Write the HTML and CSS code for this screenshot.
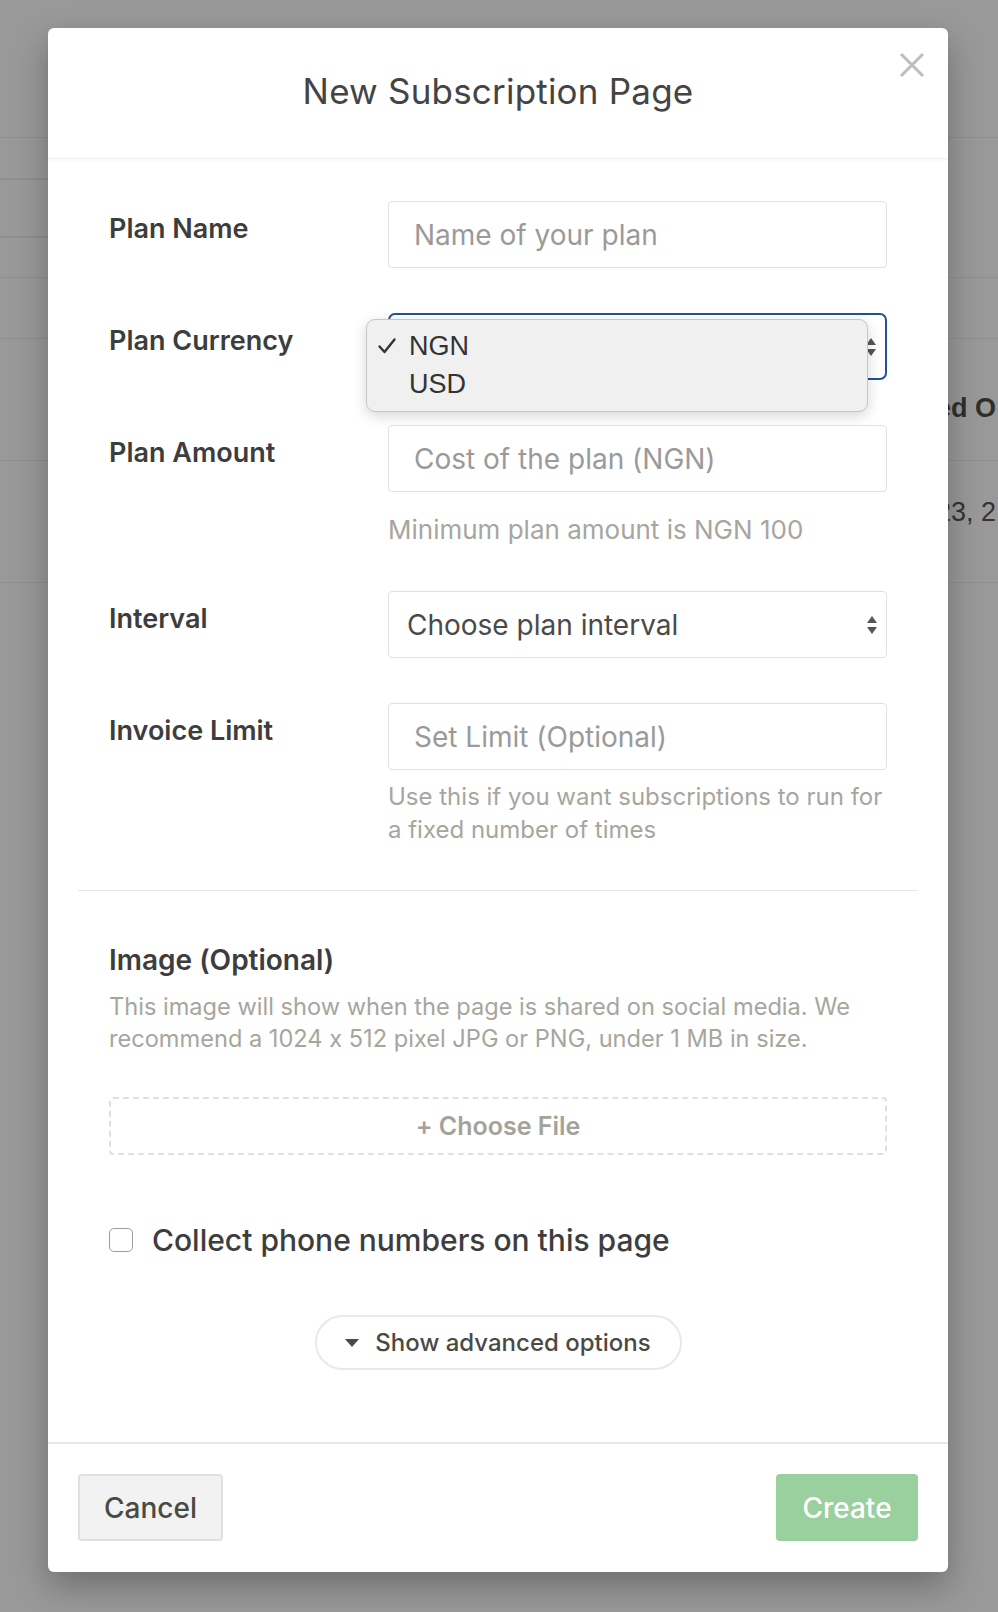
FILE: index.html
```html
<!DOCTYPE html>
<html lang="en">
<head>
<meta charset="utf-8">
<title>New Subscription Page</title>
<link rel="stylesheet" href="styles.css">
</head>
<body>
<div class="page">
  <div class="bg-row h-a"></div>
  <div class="bg-row left-only h-b"></div>
  <div class="bg-row left-only h-c"></div>
  <div class="bg-row h-d"></div>
  <div class="bg-row h-e"></div>
  <div class="bg-row h-f"><span class="bg-text bold">ed O</span></div>
  <div class="bg-row h-g"><span class="bg-text">23, 2</span></div>
</div>

<div class="modal">
  <div class="modal-header">
    <h1 class="modal-title">New Subscription Page</h1>
    <svg class="close" viewBox="0 0 28 28" width="28" height="28"><path d="M3 3L25 25M25 3L3 25" stroke="#bdbdbd" stroke-width="3" fill="none"/></svg>
  </div>

  <div class="modal-body">
    <div class="fields">
      <div class="row">
        <div class="label">Plan Name</div>
        <div class="field"><div class="input placeholder">Name of your plan</div></div>
      </div>

      <div class="row">
        <div class="label">Plan Currency</div>
        <div class="field">
          <div class="input select focused">
            <span class="select-text">NGN</span>
            <svg class="arrows" viewBox="0 0 10 18" width="10" height="18"><path d="M5 0L10 7H0Z M5 18L10 11H0Z" fill="#555"/></svg>
          </div>
          <div class="menu">
            <div class="menu-item">
              <svg class="check" viewBox="0 0 20 20" width="20" height="20"><path d="M2.5 10.5L7.5 16L17.5 3.5" stroke="#333" stroke-width="2.4" fill="none" stroke-linecap="round" stroke-linejoin="round"/></svg>
              <span>NGN</span>
            </div>
            <div class="menu-item"><span>USD</span></div>
          </div>
        </div>
      </div>

      <div class="row">
        <div class="label">Plan Amount</div>
        <div class="field">
          <div class="input placeholder">Cost of the plan (NGN)</div>
          <p class="hint hint-amount">Minimum plan amount is NGN 100</p>
        </div>
      </div>

      <div class="row row-interval">
        <div class="label">Interval</div>
        <div class="field">
          <div class="input select">
            <span class="select-text">Choose plan interval</span>
            <svg class="arrows" viewBox="0 0 10 18" width="10" height="18"><path d="M5 0L10 7H0Z M5 18L10 11H0Z" fill="#555"/></svg>
          </div>
        </div>
      </div>

      <div class="row last">
        <div class="label">Invoice Limit</div>
        <div class="field">
          <div class="input placeholder">Set Limit (Optional)</div>
          <p class="hint hint-limit">Use this if you want subscriptions to run for a fixed number of times</p>
        </div>
      </div>
    </div>

    <hr class="divider">

    <div class="fields">
      <h2 class="section-title">Image (Optional)</h2>
      <p class="section-desc">This image will show when the page is shared on social media. We recommend a 1024 x 512 pixel JPG or PNG, under 1 MB in size.</p>
      <div class="dropzone">+ Choose File</div>

      <label class="checkbox-row">
        <span class="checkbox"></span>
        <span class="checkbox-label">Collect phone numbers on this page</span>
      </label>
    </div>

    <div class="advanced-wrap">
      <div class="advanced">
        <svg class="caret" viewBox="0 0 14 8" width="14" height="8"><path d="M0 0H14L7 8Z" fill="#4a4a44"/></svg>
        <span>Show advanced options</span>
      </div>
    </div>
  </div>

  <div class="modal-footer">
    <div class="btn btn-cancel">Cancel</div>
    <div class="btn btn-create">Create</div>
  </div>
</div>
</body>
</html>
```

FILE: styles.css
```css
* { box-sizing: border-box; margin: 0; padding: 0; }
html, body { width: 998px; height: 1612px; overflow: hidden; }
body {
  background: #999999;
  font-family: Inter, "Liberation Sans", sans-serif;
  font-feature-settings: "calt" 0;
  position: relative;
}

/* background page (dimmed) */
.page { width: 998px; }
.bg-row { border-bottom: 1px solid #8e8e8e; position: relative; white-space: nowrap; overflow: hidden; }
.bg-row.left-only { border-bottom: none; }
.bg-row.left-only::after {
  content: ""; position: absolute; left: 0; bottom: 0; width: 60px; height: 2px; background: #8a9096;
}
.h-a { height: 138px; }
.h-b { height: 42px; }
.h-c { height: 58px; }
.h-d { height: 40px; }
.h-e { height: 61px; }
.h-f { height: 122px; padding-top: 52px; }
.h-g { height: 122px; padding-top: 34px; }
.bg-text {
  display: block; padding-left: 936px; font-size: 27px; line-height: 34px; color: #333;
  font-family: "Liberation Sans", Arial, sans-serif;
}
.bg-text.bold { font-weight: 700; color: #2f2f2c; }

/* modal */
.modal {
  position: absolute; left: 48px; top: 28px; width: 900px;
  background: #fff; border-radius: 6px;
  box-shadow: 0 14px 34px rgba(0, 0, 0, 0.28);
}
.modal-header {
  height: 131px; position: relative;
  display: flex; align-items: center; justify-content: center;
  padding-bottom: 4px;
  border-bottom: 1px solid #f0f0f0;
  box-shadow: 0 2px 4px rgba(0, 0, 0, 0.03);
}
.modal-title { font-size: 35px; font-weight: 400; color: #444; letter-spacing: 0.2px; }
.close { position: absolute; right: 22px; top: 23px; }

.modal-body { padding: 42px 30px 72px; }
.fields { padding: 0 31px; }
.row { display: flex; margin-bottom: 45px; }
.row.row-interval { margin-top: 1px; }
.row.last { margin-bottom: 0; }
.label {
  width: 279px; flex: none; padding-top: 11px;
  font-size: 27px; line-height: 34px; font-weight: 600; color: #3d3d3d;
}
.field { width: 499px; position: relative; }
.input {
  height: 67px; border: 1.5px solid #dde2e6; border-radius: 4px;
  padding-left: 25px; display: flex; align-items: center;
  font-size: 28px; color: #9a9a9a; background: #fff;
}
.select { padding-left: 18px; padding-right: 9px; justify-content: space-between; color: #4a4a4a; }
.select.focused { border: 2px solid #1f5494; border-radius: 7px; }
.arrows { flex: none; }

.menu {
  position: absolute; left: -22px; top: 6px; width: 502px; height: 93px;
  background: #f0f0f0; border: 1px solid #c6c6c6; border-radius: 9px;
  box-shadow: 0 4px 14px rgba(0, 0, 0, 0.16);
  padding-top: 7px;
  font-family: "Liberation Sans", Arial, sans-serif; font-size: 27px; color: #333;
}
.menu-item { height: 38px; display: flex; align-items: center; padding-left: 42px; position: relative; }
.check { position: absolute; left: 10px; top: 9px; }

.hint { font-size: 26px; line-height: 33px; color: #a6a69e; }
.hint-amount { margin-top: 21px; }
.hint-limit { margin-top: 10px; font-size: 24px; }

.divider { border: none; border-top: 1px solid #e6e6e6; margin-top: 44px; }

.section-title { margin-top: 52px; font-size: 28px; line-height: 34px; font-weight: 600; color: #3d3d3d; }
.section-desc { margin-top: 14px; font-size: 23.6px; line-height: 32px; color: #a6a69e; }
.dropzone {
  margin-top: 42px; height: 58px; border: 2px dashed #e0e0e0; border-radius: 4px;
  display: flex; align-items: center; justify-content: center;
  font-size: 25px; font-weight: 600; color: #a3a39a;
}

.checkbox-row { margin-top: 67px; height: 36px; display: flex; align-items: center; gap: 19px; }
.checkbox {
  width: 24px; height: 24px; flex: none; border: 1.5px solid #9c9c9c; border-radius: 5px; background: #fff;
}
.checkbox-label { font-size: 30px; font-weight: 500; color: #3d3d3d; }

.advanced-wrap { display: flex; justify-content: center; margin-top: 57px; }
.advanced {
  width: 367px; height: 55px; border: 2px solid #e9e9e9; border-radius: 28px;
  display: flex; align-items: center; justify-content: center; gap: 16px;
  font-size: 24px; font-weight: 500; color: #4a4a44;
}

.modal-footer {
  border-top: 2px solid #e8e8e8;
  padding: 30px 30px 31px;
  display: flex; justify-content: space-between;
}
.btn {
  height: 67px; border-radius: 4px; display: flex; align-items: center; justify-content: center;
  font-size: 28px; font-weight: 500;
}
.btn-cancel { width: 145px; background: #f2f2f2; border: 2px solid #e0e0e0; color: #4a4a44; }
.btn-create { width: 142px; background: #9acf9e; color: #fff; }
```
